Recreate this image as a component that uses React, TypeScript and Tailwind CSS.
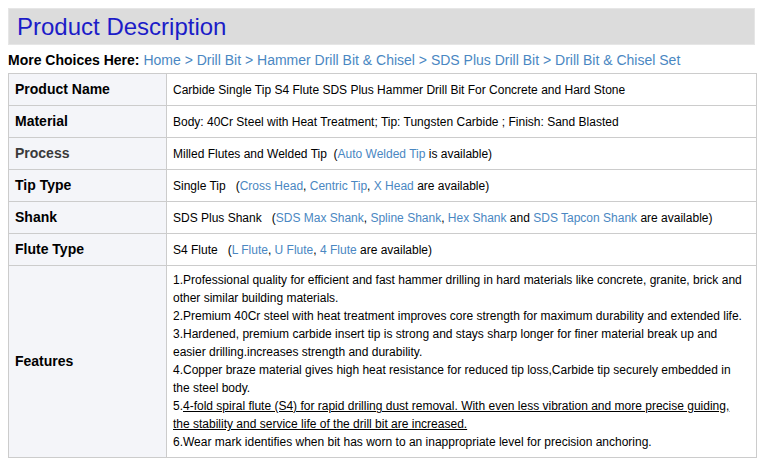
import React from "react";

const LINK = "text-[#4a87c2]";

const A = ({ children }: { children: React.ReactNode }) => (
  <span className={LINK}>{children}</span>
);

const rows: { label: string; content: React.ReactNode }[] = [
  {
    label: "Product Name",
    content: "Carbide Single Tip S4 Flute SDS Plus Hammer Drill Bit For Concrete and Hard Stone",
  },
  {
    label: "Material",
    content: "Body: 40Cr Steel with Heat Treatment; Tip: Tungsten Carbide ; Finish: Sand Blasted",
  },
  {
    label: "Process",
    content: (
      <>
        Milled Flutes and Welded Tip&nbsp; (<A>Auto Welded Tip</A> is available)
      </>
    ),
  },
  {
    label: "Tip Type",
    content: (
      <>
        Single Tip&nbsp;&nbsp; (<A>Cross Head</A>, <A>Centric Tip</A>, <A>X Head</A> are available)
      </>
    ),
  },
  {
    label: "Shank",
    content: (
      <>
        SDS Plus Shank&nbsp;&nbsp; (<A>SDS Max Shank</A>, <A>Spline Shank</A>, <A>Hex Shank</A> and{" "}
        <A>SDS Tapcon Shank</A> are available)
      </>
    ),
  },
  {
    label: "Flute Type",
    content: (
      <>
        S4 Flute&nbsp;&nbsp; (<A>L Flute</A>, <A>U Flute</A>, <A>4 Flute</A> are available)
      </>
    ),
  },
];

const App = () => {
  return (
    <div className="p-2 bg-white min-h-screen font-['Liberation_Sans',Arial,sans-serif] text-black">
      {/* Header bar */}
      <div className="h-[37px] bg-[#dcdcdc] border border-[#e6e6e6] flex items-center px-2">
        <h1 className="text-[24px] leading-none text-[#1c1cc8]">Product Description</h1>
      </div>

      {/* Breadcrumb */}
      <div className="mt-[4px] h-[22px] text-[14px] leading-[22px] whitespace-nowrap">
        <span className="font-bold">More Choices Here: </span>
        <A>Home</A> <A>&gt;</A> <A>Drill Bit</A> <A>&gt;</A> <A>Hammer Drill Bit &amp; Chisel</A>{" "}
        <A>&gt;</A> <A>SDS Plus Drill Bit</A> <A>&gt;</A> <A>Drill Bit &amp; Chisel Set</A>
      </div>

      {/* Spec table */}
      <table className="mt-[2px] w-[749px] border-collapse border border-[#cccccc] table-fixed">
        <colgroup>
          <col className="w-[158px]" />
          <col />
        </colgroup>
        <tbody>
          {rows.map((r) => (
            <tr key={r.label} className="h-[32px]">
              <td
                className={`border border-[#cccccc] bg-[#f4f5f9] px-[6px] text-[14px] font-bold align-middle ${
                  r.label === "Process" ? "text-[#3a3a3a]" : ""
                }`}
              >
                {r.label}
              </td>
              <td className="border border-[#cccccc] px-[6px] text-[12px] align-middle">{r.content}</td>
            </tr>
          ))}
          <tr>
            <td className="border border-[#cccccc] bg-[#f4f5f9] px-[6px] text-[14px] font-bold align-middle">
              Features
            </td>
            <td className="border border-[#cccccc] pl-[6px] pr-[12px] pt-[5px] pb-[6px] text-[12px] leading-[18px]">
              <div>
                1.Professional quality for efficient and fast hammer drilling in hard materials like concrete, granite,
                brick and other similar building materials.
              </div>
              <div>
                2.Premium 40Cr steel with heat treatment improves core strength for maximum durability and extended
                life.
              </div>
              <div>
                3.Hardened, premium carbide insert tip is strong and stays sharp longer for finer material break up and
                easier drilling.increases strength and durability.
              </div>
              <div>
                4.Copper braze material gives high heat resistance for reduced tip loss,Carbide tip securely embedded in
                the steel body.
              </div>
              <div>
                5.
                <span className="underline">
                  4-fold spiral flute (S4) for rapid drilling dust removal. With even less vibration and more precise
                  guiding, the stability and service life of the drill bit are increased.
                </span>
              </div>
              <div>6.Wear mark identifies when bit has worn to an inappropriate level for precision anchoring.</div>
            </td>
          </tr>
        </tbody>
      </table>
    </div>
  );
};

export default App;
